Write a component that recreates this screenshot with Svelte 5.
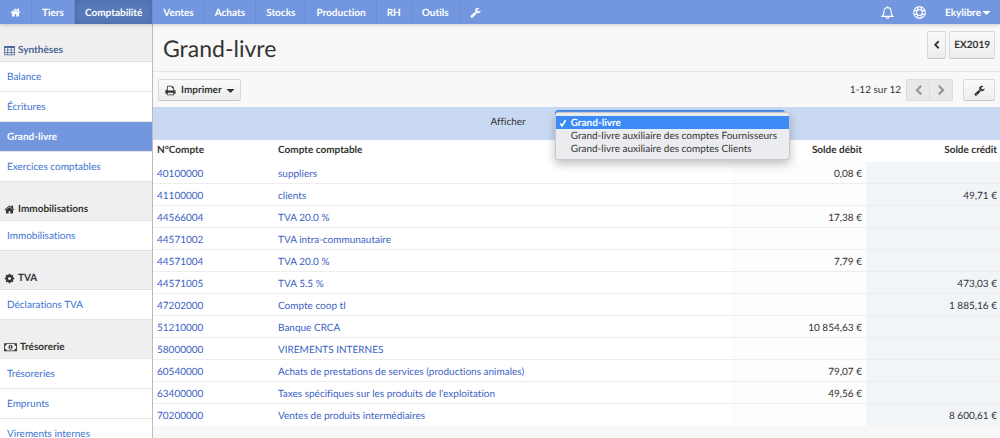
<script>
  const icons = {
    home: 'M1472 992v480q0 26-19 45t-45 19h-384v-384h-256v384h-384q-26 0-45-19t-19-45v-480q0-1 .5-3t.5-3l575-474 575 474q1 2 1 6zm223-69l-62 74q-8 9-21 11h-3q-13 0-21-7l-692-577-692 577q-12 8-24 7-13-2-21-11l-62-74q-8-10-7-23.500t11-21.500l719-599q32-26 76-26t76 26l244 204v-195q0-14 9-23t23-9h192q14 0 23 9t9 23v408l219 182q10 8 11 21.500t-7 23.500z',
    wrench: 'M448 1472q0-26-19-45t-45-19-45 19-19 45 19 45 45 19 45-19 19-45zm644-420l-682 682q-37 37-90 37-52 0-91-37l-106-108q-38-36-38-90 0-53 38-91l681-681q39 98 114.500 173.500t173.500 114.500zm634-435q0 39-23 106-47 134-164.500 217.500t-258.500 83.500q-185 0-316.500-131.500t-131.500-316.500 131.500-316.500 316.500-131.500q58 0 121.500 16.500t107.500 46.500q16 11 16 28t-16 28l-293 169v224l193 107q5-3 79-48.500t135.500-81 70.500-35.500q15 0 23.500 10t8.500 25z',
    cog: 'M1152 896q0-106-75-181t-181-75-181 75-75 181 75 181 181 75 181-75 75-181zm512-109v222q0 12-8 23t-20 13l-185 28q-19 54-39 91 35 50 107 138 10 12 10 25t-9 23q-27 37-99 108t-94 71q-12 0-26-9l-138-108q-44 23-91 38-16 136-29 186-7 28-36 28h-222q-14 0-24.500-8.500t-11.500-21.500l-28-184q-49-16-90-37l-141 107q-10 9-25 9-14 0-25-11-126-114-165-168-7-10-7-23 0-12 8-23 15-21 51-66.500t54-70.500q-27-50-41-99l-183-27q-13-2-21-12.500t-8-23.500v-222q0-12 8-23t19-13l186-28q14-46 39-92-40-57-107-138-10-12-10-24 0-10 9-23 26-36 98.500-107.500t94.500-71.500q13 0 26 10l138 107q44-23 91-38 16-136 29-186 7-28 36-28h222q14 0 24.500 8.500t11.500 21.500l28 184q49 16 90 37l142-107q9-9 24-9 13 0 25 10 129 119 165 170 7 8 7 22 0 12-8 23-15 21-51 66.500t-54 70.500q26 50 41 98l183 28q13 2 21 12.500t8 23.500z',
    print: 'M448 1536h896v-256h-896v256zm0-640h896v-384h-160q-40 0-68-28t-28-68v-160h-640v640zm1152 64q0-26-19-45t-45-19-45 19-19 45 19 45 45 19 45-19 19-45zm128 0v416q0 13-9.500 22.500t-22.500 9.500h-224v160q0 40-28 68t-68 28h-960q-40 0-68-28t-28-68v-160h-224q-13 0-22.500-9.500t-9.500-22.500v-416q0-79 56.500-135.500t135.500-56.500h64v-544q0-40 28-68t68-28h672q40 0 88 20t76 48l152 152q28 28 48 76t20 88v256h64q79 0 135.500 56.500t56.500 135.500z',
    left: 'M1427 301l-531 531 531 531q19 19 19 45t-19 45l-166 166q-19 19-45 19t-45-19l-742-742q-19-19-19-45t19-45l742-742q19-19 45-19t45 19l166 166q19 19 19 45t-19 45z',
    right: 'M365 301l531 531-531 531q-19 19-19 45t19 45l166 166q19 19 45 19t45-19l742-742q19-19 19-45t-19-45l-742-742q-19-19-45-19t-45 19l-166 166q-19 19-19 45t19 45z',
    caret: 'M1500 704q0 26-19 45l-540 500q-19 19-45 19t-45-19l-540-500q-19-19-19-45t19-45 45-19h1080q26 0 45 19t19 45z',
    table: 'M140 176h1512q140 0 140 140v1200q0 140-140 140h-1512q-140 0-140-140v-1200q0-140 140-140zM120 470v290h430v-290zm550 0v290h452v-290zm572 0v290h430v-290zM120 870v270h430v-270zm550 0v270h452v-270zm572 0v270h430v-270zM120 1250v286h430v-286zm550 0v286h452v-286zm572 0v286h430v-286z',
    money: 'M0 320h1920v1216h-1920zM384 448q0 106-75 181t-181 75v448q106 0 181 75t75 181h1152q0-106 75-181t181-75v-448q-106 0-181-75t-75-181zM960 544q150 0 220 120t70 264-70 264-220 120-220-120-70-264 70-264 220-120zM800 1184h320v-90h-96v-440h-90l-134 120 60 70 54-46v296h-114z',
  };
  const modules = ['Tiers', 'Comptabilité', 'Ventes', 'Achats', 'Stocks', 'Production', 'RH', 'Outils'];
  const groups = [
    { title: 'Synthèses', icon: 'table', items: ['Balance', 'Écritures', 'Grand-livre', 'Exercices comptables'] },
    { title: 'Immobilisations', icon: 'home', items: ['Immobilisations'] },
    { title: 'TVA', icon: 'cog', items: ['Déclarations TVA'] },
    { title: 'Trésorerie', icon: 'money', items: ['Trésoreries', 'Emprunts', 'Virements internes'] },
  ];
  const ledgers = ['Grand-livre', 'Grand-livre auxiliaire des comptes Fournisseurs', 'Grand-livre auxiliaire des comptes Clients'];
  let selected = $state('Grand-livre');
  const rows = [
    ['40100000', 'suppliers', '0,08 €', ''],
    ['41100000', 'clients', '', '49,71 €'],
    ['44566004', 'TVA 20.0 %', '17,38 €', ''],
    ['44571002', 'TVA intra-communautaire', '', ''],
    ['44571004', 'TVA 20.0 %', '7,79 €', ''],
    ['44571005', 'TVA 5.5 %', '', '473,03 €'],
    ['47202000', 'Compte coop tl', '', '1 885,16 €'],
    ['51210000', 'Banque CRCA', '10 854,63 €', ''],
    ['58000000', 'VIREMENTS INTERNES', '', ''],
    ['60540000', 'Achats de prestations de services (productions animales)', '79,07 €', ''],
    ['63400000', "Taxes spécifiques sur les produits de l'exploitation", '49,56 €', ''],
    ['70200000', 'Ventes de produits intermédiaires', '', '8 600,61 €'],
  ];
</script>

{#snippet icon(name)}
  <svg class="icon {name}" viewBox={name === 'money' ? '0 0 1920 1792' : '0 0 1792 1792'} aria-hidden="true"><path fill-rule="evenodd" d={icons[name]} /></svg>
{/snippet}

<div class="page">
  <nav class="topbar">
    <a href="#accueil" aria-label="Accueil">{@render icon('home')}</a>
    {#each modules as m}
      <a href="#{m}" class:active={m === 'Comptabilité'}>{m}</a>
    {/each}
    <a href="#reglages" class="last" aria-label="Réglages">{@render icon('wrench')}</a>
    <div class="account">
      <button aria-label="Notifications">
        <svg class="glyph" viewBox="0 0 12 12" aria-hidden="true"><path d="M6 .4v1M1 9.600C2.400 8.300 2.700 6.900 2.700 5 2.700 2.700 4 1.500 6 1.500S9.300 2.700 9.300 5c0 1.900.3 3.300 1.700 4.600zM4.800 10.100c0 1.700 2.400 1.700 2.400 0" /></svg>
      </button>
      <button aria-label="Aide">
        <svg class="glyph" viewBox="0 0 12 12" aria-hidden="true"><circle cx="6" cy="6" r="5.400" /><circle cx="6" cy="6" r="2.700" /><path d="M4.300 1v3.100M7.700 1v3.100M4.300 7.900V11M7.700 7.900V11M1 4.300h3.100M1 7.700h3.100M7.900 4.300H11M7.900 7.700H11" /></svg>
      </button>
      <button class="user">Ekylibre{@render icon('caret')}</button>
    </div>
  </nav>

  <div class="body">
    <aside>
      {#each groups as g, i}
        <section>
          <h2 class:first={i === 0}>{@render icon(g.icon)}{g.title}</h2>
          <ul>
            {#each g.items as item}
              <li><a href="#{item}" class:current={item === 'Grand-livre'}>{item}</a></li>
            {/each}
          </ul>
        </section>
      {/each}
    </aside>

    <main>
      <header>
        <h1>Grand-livre</h1>
        <div class="years">
          <button class="btn" aria-label="Exercice précédent">{@render icon('left')}</button>
          <button class="btn">EX2019</button>
        </div>
      </header>

      <div class="toolbar">
        <button class="btn print-btn">{@render icon('print')}Imprimer{@render icon('caret')}</button>
        <span class="count">1-12 sur 12</span>
        <div class="pager">
          <button class="btn" disabled aria-label="Page précédente">{@render icon('left')}</button>
          <button class="btn" disabled aria-label="Page suivante">{@render icon('right')}</button>
        </div>
        <button class="btn tool" aria-label="Options">{@render icon('wrench')}</button>
      </div>

      <div class="filter">
        <label for="ledger">Afficher</label>
        <div class="picker">
          <select id="ledger" bind:value={selected}>
            {#each ledgers as l}<option>{l}</option>{/each}
          </select>
          <div class="menu" role="listbox" aria-label="Afficher">
            {#each ledgers as l}
              <button role="option" aria-selected={l === selected} onclick={() => (selected = l)}>
                <span class="tick">{#if l === selected}<svg viewBox="0 0 8 8" aria-hidden="true"><path d="M1.300 4.500 3.100 7 6.600 1" /></svg>{/if}</span>{l}
              </button>
            {/each}
          </div>
        </div>
      </div>

      <table>
        <thead>
          <tr><th class="num">N°Compte</th><th>Compte comptable</th><th class="amount">Solde débit</th><th class="amount">Solde crédit</th></tr>
        </thead>
        <tbody>
          {#each rows as [num, name, debit, credit]}
            <tr>
              <td><a href="#{num}">{num}</a></td>
              <td><a href="#{num}">{name}</a></td>
              <td class="amount debit">{debit}</td>
              <td class="amount credit">{credit}</td>
            </tr>
          {/each}
        </tbody>
      </table>
    </main>
  </div>
</div>

<style>
  :global(body) { margin: 0; overflow: hidden; }
  * { box-sizing: border-box; }
  .page { height: 100vh; display: flex; flex-direction: column; overflow: hidden; font: 10px/14px Lato, sans-serif; font-variant-ligatures: none; text-rendering: geometricPrecision; color: #333; background: #f8f8f8; }
  button, select { font: inherit; font-variant-ligatures: none; color: inherit; text-rendering: inherit; }
  a { text-decoration: none; }
  .icon { width: 11px; height: 11px; fill: currentColor; flex: none; }
  .icon.money { width: 13px; height: 12px; }

  .topbar { display: flex; flex: none; height: 24px; background: #7297de; color: #fff; font-weight: 700; position: relative; box-shadow: 0 1px 4px rgba(0, 0, 0, .18); }
  .topbar > a { display: flex; align-items: center; padding: 1px 10px 0; color: #fff; border-right: 1px solid #688dd5; }
  .topbar > a.last { border-right: 0; }
  .topbar > a.active { background: #5779b8; box-shadow: inset 0 0 6px #4767a5; }
  .account { display: flex; align-items: center; margin-left: auto; padding: 1px 8px 0 0; gap: 19px; }
  .account button { display: flex; align-items: center; padding: 0; border: 0; background: none; }
  .account .user { font-weight: 700; }
  .glyph { width: 13px; height: 13px; fill: none; stroke: #fff; stroke-width: 1; }

  .body { display: flex; flex: 1; min-height: 0; }
  aside { flex: none; width: 153px; border-right: 1px solid #bbb; background: #efefef; overflow: hidden; }
  h2 { display: flex; align-items: flex-end; gap: 3px; height: 40px; margin: 0; padding: 0 4px 4px; font-size: 10px; line-height: 14px; font-weight: 700; border-top: 1px solid #e4e4e4; border-bottom: 1px solid #e4e4e4; }
  h2.first { height: 38px; border-top: 0; color: #4a6596; }
  h2 .icon { margin-bottom: 1px; }
  ul { margin: 0; padding: 0; list-style: none; background: #fff; }
  li + li { border-top: 1px solid #e6e6e6; }
  li a { display: block; height: 29px; padding: 0 7px; line-height: 30px; color: #3b73d1; }
  li a.current { background: #7297de; color: #fff; font-weight: 700; }

  main { flex: 1; min-width: 0; }
  header { display: flex; justify-content: space-between; align-items: center; height: 48px; padding: 0 5px 0 10px; border-bottom: 1px solid #e6e6e6; }
  h1 { margin: 0; font-size: 23px; line-height: 32px; font-weight: 400; }
  .years { display: flex; gap: 3px; margin-bottom: 6px; }
  .btn { display: flex; align-items: center; justify-content: center; height: 22px; padding: 1px 5px 0; border: 1px solid #d9d9d9; border-bottom-color: #c8c8c8; border-radius: 2px; background: linear-gradient(#fafafa, #ededed); font-weight: 700; }
  .years .btn { height: 28px; padding: 0 4px; }
  .years .icon { width: 9px; height: 10px; }
  .toolbar { display: flex; align-items: center; height: 35px; padding: 0 5px; }
  .print-btn { padding: 1px 4px 0 6px; gap: 5px; margin-right: auto; }
  .print-btn .caret { margin-left: -2px; }
  .pager { display: flex; margin: 0 10px 0 5px; }
  .pager .btn { width: 24px; background: #e9e9e9; border-color: #dcdcdc; color: #999; }
  .pager .btn + .btn { margin-left: -1px; border-radius: 0 2px 2px 0; }
  .tool { width: 32px; }

  .filter { display: flex; align-items: flex-start; height: 33px; padding-top: 3px; background: #cad9f3; }
  .filter label { width: 44%; padding-top: 5px; text-align: right; }
  .picker { position: relative; margin-left: 29px; width: 230px; }
  select { width: 100%; height: 24px; border: 1px solid #3f85e8; border-radius: 3px; background: #5b98ee; color: #fff; }
  .menu { position: absolute; z-index: 2; top: 2px; left: 0; width: 235px; padding: 3px 0 4px; background: #ebecef; border: 1px solid #c6c7ca; border-radius: 3px; box-shadow: 0 4px 10px rgba(0, 0, 0, .25); }
  .menu button { display: flex; align-items: center; width: 100%; height: 13px; padding: 0; border: 0; background: none; text-align: left; white-space: nowrap; }
  .menu button[aria-selected='true'] { background: #3b8af6; color: #fff; font-weight: 700; }
  .tick { display: flex; justify-content: center; width: 15px; }
  .tick svg { width: 8px; height: 8px; fill: none; stroke: currentColor; stroke-width: 1.500; }

  table { width: 100%; table-layout: fixed; border-collapse: separate; border-spacing: 0; background: #fff; }
  th, td { height: 22px; padding: 0 4px; text-align: left; white-space: nowrap; }
  th { padding-bottom: 2px; }
  td { padding-top: 2px; border-bottom: 1px solid #ededed; }
  tr:last-child td { border-bottom: 0; }
  td a { color: #3d5fc4; }
  th.num { width: 121px; }
  th.amount { width: 134px; }
  .amount { text-align: right; }
  .amount:last-child { padding-right: 3px; }
  .debit { background: #fdfdfd; }
  .credit { background: #f2f5f8; }
</style>
